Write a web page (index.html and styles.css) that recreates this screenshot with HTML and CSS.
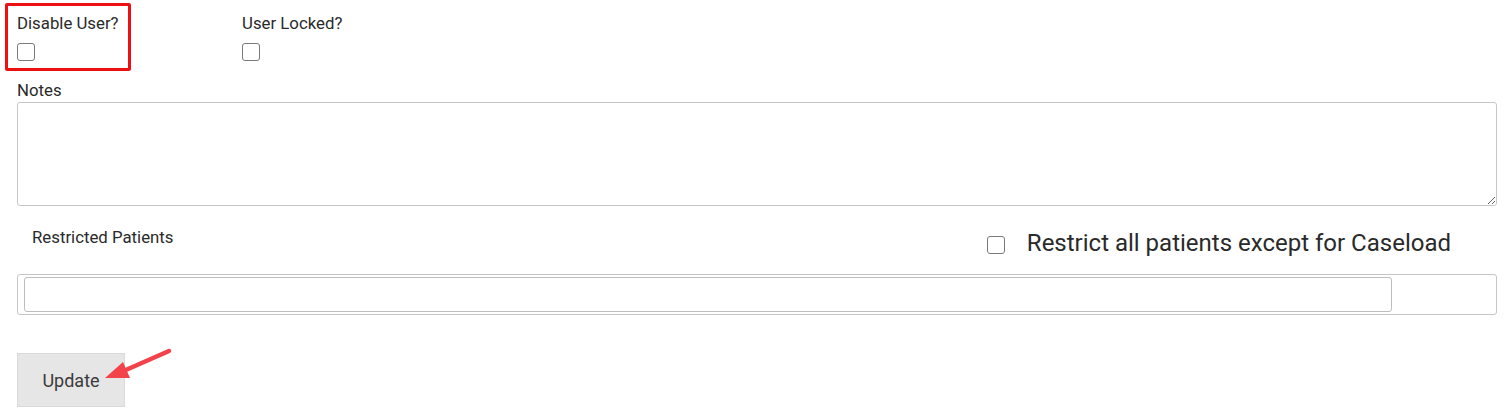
FILE: index.html
```html
<!DOCTYPE html>
<html>
<head>
<meta charset="utf-8">
<link rel="stylesheet" href="styles.css">
</head>
<body>
<div class="page">
  <div class="flags">
    <div class="field field-disable">
      <label class="lbl">Disable User?</label>
      <input type="checkbox" class="cb">
      <div class="highlight"></div>
    </div>
    <div class="field">
      <label class="lbl">User Locked?</label>
      <input type="checkbox" class="cb">
    </div>
  </div>
  <div class="notes">
    <label class="lbl">Notes</label>
    <textarea class="ta"></textarea>
  </div>
  <div class="restricted-head">
    <span class="lbl rp">Restricted Patients</span>
    <label class="caseload"><input type="checkbox" class="cb"><span>Restrict all patients except for Caseload</span></label>
  </div>
  <div class="picker">
    <input type="text" class="pick-input">
  </div>
  <div class="actions">
    <button class="btn">Update</button>
    <svg class="arrow" width="80" height="40" viewBox="0 0 80 40">
      <line x1="66" y1="4" x2="16" y2="26" stroke="#f2434a" stroke-width="4.5" stroke-linecap="round"/>
      <polygon points="2,31 20,15 27,31" fill="#f2434a"/>
    </svg>
  </div>
</div>
</body>
</html>
```

FILE: styles.css
```css
html, body { margin: 0; padding: 0; background: #fff; }
body { font-family: Roboto, "Noto Sans", Arial, sans-serif; color: #2a2a2a; }
.page { padding: 14px 7px 0 17px; }
.flags { display: flex; height: 67px; }
.field { position: relative; display: flex; flex-direction: column; width: 225px; }
.lbl { font-size: 16.8px; line-height: 18px; color: #2a2a2a; }
.cb {
  -webkit-appearance: none; appearance: none; margin: 0;
  width: 18px; height: 18px; box-sizing: border-box;
  border: 1.5px solid #7a7a7a; border-radius: 3px; background: #fff;
}
.flags .cb { margin-top: 11px; }
.highlight {
  position: absolute; left: -12px; top: -11px; width: 126px; height: 68px;
  border: 3.5px solid #ee1010; border-radius: 2px; box-sizing: border-box;
}
.notes { display: flex; flex-direction: column; }
.notes .lbl { margin-bottom: 3px; }
.ta {
  height: 104px; box-sizing: border-box; margin: 0;
  border: 1px solid #c6c6c6; border-radius: 3px; resize: vertical;
  font-family: inherit;
}
.restricted-head { display: flex; justify-content: space-between; align-items: flex-start; margin-top: 22px; height: 46px; }
.rp { margin-left: 15px; margin-top: 0; }
.caseload { display: flex; align-items: center; gap: 22px; font-size: 24px; line-height: 28px; color: #2a2a2a; margin-right: 46px; margin-top: 1px; }
.caseload .cb { margin-top: 4px; }
.picker {
  height: 41px; box-sizing: border-box; border: 1px solid #c6c6c6; border-radius: 3px;
  padding: 2px 104px 2px 6px; display: flex;
}
.pick-input {
  flex: 1; margin: 0; box-sizing: border-box; height: 35px;
  border: 1px solid #bdbdbd; border-radius: 3px; font-family: inherit;
}
.actions { position: relative; margin-top: 38px; }
.btn {
  width: 108px; height: 54px; background: #e6e6e6; border: 1px solid #dadada;
  border-radius: 0; font-family: inherit; font-size: 18px; color: #3a3a3a; padding: 0; margin: 0;
}
.arrow { position: absolute; left: 86px; top: -6px; }
```
